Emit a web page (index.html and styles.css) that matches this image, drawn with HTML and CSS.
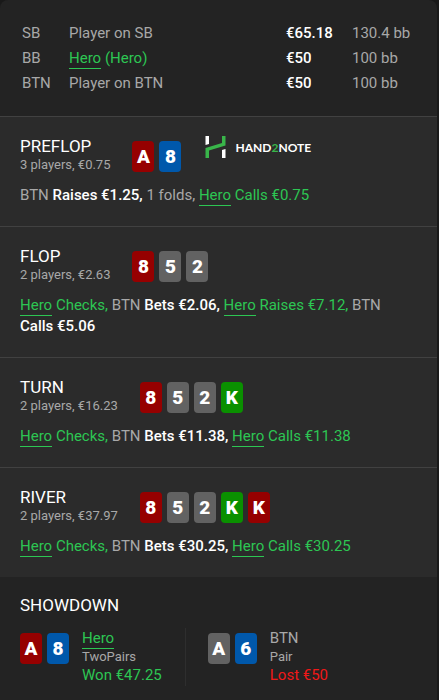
FILE: index.html
```html
<!DOCTYPE html>
<html lang="en">

<head>
  <meta charset="utf-8" />
  <meta name="viewport" content="width=device-width, initial-scale=1" />
  <title>Hand history</title>
  <link rel="stylesheet" href="styles.css">
</head>

<body>
  <main class="hand">
    <div class="players">
      <table class="players-table">
        <tr>
          <td class="position">SB</td>
          <td>Player on SB</td>
          <td class="stack">€65.18</td>
          <td class="blinds">130.4 bb</td>
        </tr>
        <tr>
          <td class="position">BB</td>
          <td class="hero"><a href="#hero">Hero</a> (Hero)</td>
          <td class="stack">€50</td>
          <td class="blinds">100 bb</td>
        </tr>
        <tr>
          <td class="position">BTN</td>
          <td>Player on BTN</td>
          <td class="stack">€50</td>
          <td class="blinds">100 bb</td>
        </tr>
      </table>
    </div>

    <section class="street">
      <div class="street-head">
        <div>
          <h2 class="title">PREFLOP</h2>
          <p class="info">3 players, €0.75</p>
        </div>
        <div class="cards">
          <span class="card heart">A</span>
          <span class="card diamond">8</span>
        </div>
        <div class="logo">
          <svg class="logo-icon" viewBox="0 0 21 22" aria-hidden="true">
            <path fill="#fff" d="M0.5 0h3.5v8l-3.5 1zM17 14l3.500-1v9H17z" />
            <path fill="#39b54a" d="M17 0h3.500v9.500L4 14.500V22H0.500V12L17 7z" />
          </svg>
          <span class="logo-text">HAND<span class="logo-two">2</span>NOTE</span>
        </div>
      </div>
      <p class="actions">BTN <b>Raises €1.25,</b> 1 folds, <span class="hero"><a href="#hero">Hero</a> Calls €0.75</span></p>
    </section>

    <section class="street">
      <div class="street-head">
        <div>
          <h2 class="title">FLOP</h2>
          <p class="info">2 players, €2.63</p>
        </div>
        <div class="cards">
          <span class="card heart">8</span>
          <span class="card spade">5</span>
          <span class="card spade">2</span>
        </div>
      </div>
      <p class="actions"><span class="hero"><a href="#hero">Hero</a> Checks,</span> BTN <b>Bets €2.06,</b> <span class="hero"><a href="#hero">Hero</a> Raises €7.12,</span> BTN <b>Calls €5.06</b></p>
    </section>

    <section class="street">
      <div class="street-head">
        <div>
          <h2 class="title">TURN</h2>
          <p class="info">2 players, €16.23</p>
        </div>
        <div class="cards">
          <span class="card heart">8</span>
          <span class="card spade">5</span>
          <span class="card spade">2</span>
          <span class="card club">K</span>
        </div>
      </div>
      <p class="actions"><span class="hero"><a href="#hero">Hero</a> Checks,</span> BTN <b>Bets €11.38,</b> <span class="hero"><a href="#hero">Hero</a> Calls €11.38</span></p>
    </section>

    <section class="street">
      <div class="street-head">
        <div>
          <h2 class="title">RIVER</h2>
          <p class="info">2 players, €37.97</p>
        </div>
        <div class="cards">
          <span class="card heart">8</span>
          <span class="card spade">5</span>
          <span class="card spade">2</span>
          <span class="card club">K</span>
          <span class="card heart">K</span>
        </div>
      </div>
      <p class="actions"><span class="hero"><a href="#hero">Hero</a> Checks,</span> BTN <b>Bets €30.25,</b> <span class="hero"><a href="#hero">Hero</a> Calls €30.25</span></p>
    </section>

    <section class="showdown">
      <h2 class="title">SHOWDOWN</h2>
      <div class="results">
        <div class="result">
          <div class="cards">
            <span class="card heart">A</span>
            <span class="card diamond">8</span>
          </div>
          <div>
            <p class="hero"><a href="#hero">Hero</a></p>
            <p class="combo">TwoPairs</p>
            <p class="hero">Won €47.25</p>
          </div>
        </div>
        <div class="result">
          <div class="cards">
            <span class="card spade">A</span>
            <span class="card diamond">6</span>
          </div>
          <div>
            <p>BTN</p>
            <p class="combo">Pair</p>
            <p class="lost">Lost €50</p>
          </div>
        </div>
      </div>
    </section>
  </main>
</body>

</html>
```
FILE: styles.css
```css
* {
  margin: 0;
  padding: 0;
  box-sizing: border-box;
}

body {
  background-color: #191919;
  color: #a8a8a8;
  font-family: Roboto, Arial, sans-serif;
  font-size: 15px;
  line-height: 21px;
}

.hand {
  display: flex;
  flex-direction: column;
  min-height: 100vh;
  margin-right: 2px;
  border-radius: 8px 8px 0 0;
  background-color: #232323;
}

.players {
  padding: 21px 0 20px 22px;
}

.players-table {
  width: 100%;
  border-collapse: collapse;
  table-layout: fixed;
}

.players-table td {
  height: 25px;
}

.players-table .position {
  width: 47px;
}

.players-table .stack {
  width: 66px;
  color: #fff;
  font-weight: 500;
}

.players-table .blinds {
  width: 85px;
}

.hero,
.hero a {
  color: #2dc653;
}

.hero a {
  text-decoration: none;
  border-bottom: 1px solid #2dc653;
  padding-bottom: 1px;
}

.street {
  padding: 19px 20px 20px;
  border-top: 1px solid #414141;
  background-color: #2b2b2b;
}

.street-head {
  display: flex;
  margin-bottom: 11px;
}

.title {
  color: #fff;
  font-size: 17px;
  font-weight: 400;
  line-height: 20px;
}

.info,
.combo {
  font-size: 13px;
  line-height: 18px;
}

.cards {
  display: flex;
  gap: 5px;
  padding-top: 5px;
}

.street-head .cards {
  margin-left: 22px;
}

.card {
  width: 22px;
  height: 31px;
  border-radius: 4px;
  color: #fff;
  font-size: 19px;
  font-weight: 900;
  line-height: 31px;
  text-align: center;
}

.heart {
  background-color: #960000;
}

.diamond {
  background-color: #0058ab;
}

.spade {
  background-color: #626262;
}

.club {
  background-color: #0a9000;
}

.logo {
  display: flex;
  align-items: center;
  align-self: flex-start;
  gap: 9px;
  margin-left: 24px;
}

.logo-icon {
  width: 21px;
  height: 22px;
}

.logo-text {
  color: #fff;
  font-family: Lato, sans-serif;
  font-size: 12px;
  font-weight: 700;
}

.logo-two {
  color: #39b54a;
}

.actions b {
  color: #fff;
  font-weight: 500;
}

.showdown {
  flex: 1;
  padding: 18px 20px;
}

.results {
  display: flex;
  margin-top: 13px;
}

.result {
  display: flex;
  align-items: flex-start;
  gap: 13px;
}

.result + .result {
  margin-left: 23px;
  padding-left: 22px;
  border-left: 1px solid #2e2e2e;
}

.result .combo {
  line-height: 16px;
}

.lost {
  color: #f01818;
}
```
